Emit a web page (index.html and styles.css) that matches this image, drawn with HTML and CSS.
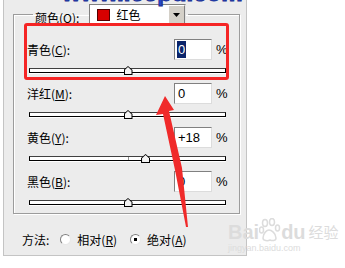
FILE: index.html
```html
<!DOCTYPE html>
<html lang="zh-CN">
<head>
    <meta charset="UTF-8">
    <meta name="viewport" content="width=device-width, initial-scale=1.0">
    <title>可选颜色</title>
    <link rel="stylesheet" href="styles.css">
</head>
<body>
    <div class="site-mark">www.leepu.com</div>

    <div class="dialog">
        <fieldset class="group">
            <legend class="group-head">
                <span class="head-label">颜色(<u>O</u>):</span>
                <span class="select">
                    <span class="swatch"></span>
                    <span class="select-text">红色</span>
                    <span class="select-btn">
                        <svg width="7" height="4" viewBox="0 0 7 4"><path d="M0 0h7L3.5 4z" fill="#000"/></svg>
                    </span>
                </span>
            </legend>

            <div class="channel">
                <span class="channel-label">青色(<u>C</u>):</span>
                <span class="value"><span class="selected">0</span></span>
                <span class="pct">%</span>
                <div class="slider"><span class="thumb" style="left: 50%"></span></div>
            </div>

            <div class="channel">
                <span class="channel-label">洋红(<u>M</u>):</span>
                <span class="value">0</span>
                <span class="pct">%</span>
                <div class="slider"><span class="thumb" style="left: 50%"></span></div>
            </div>

            <div class="channel">
                <span class="channel-label">黄色(<u>Y</u>):</span>
                <span class="value">+18</span>
                <span class="pct">%</span>
                <div class="slider tick"><span class="thumb" style="left: 59%"></span></div>
            </div>

            <div class="channel">
                <span class="channel-label">黑色(<u>B</u>):</span>
                <span class="value">0</span>
                <span class="pct">%</span>
                <div class="slider"><span class="thumb" style="left: 50%"></span></div>
            </div>
        </fieldset>

        <div class="method">
            <span>方法:</span>
            <span class="radio"></span>
            <span>相对(<u>R</u>)</span>
            <span class="radio checked"></span>
            <span>绝对(<u>A</u>)</span>
        </div>
    </div>

    <div class="highlight"></div>

    <svg class="arrow" width="345" height="268" viewBox="0 0 345 268">
        <polygon points="165,96 174,110 169,111 182,168 188,227 186,227 175,170 163,114 156,115" fill="#f02a2a"/>
    </svg>

    <div class="baidu">
        <div class="baidu-logo">
            <span class="bai">Bai</span>
            <svg width="22" height="24" viewBox="0 0 22 24">
                <g fill="none" stroke="#dcdcdc" stroke-width="1.5">
                    <ellipse cx="6" cy="5" rx="2.5" ry="3.5"/>
                    <ellipse cx="13" cy="4" rx="2.5" ry="3.5"/>
                    <ellipse cx="2.5" cy="12" rx="2" ry="3"/>
                    <ellipse cx="18.5" cy="10" rx="2" ry="3"/>
                    <path d="M4 20c0-5 4-8 6-8s7 3 7 8c0 3-4 3-6 2-2 1-7 1-7-2z"/>
                </g>
            </svg>
            <span class="bai">du</span>
            <span class="jy">经验</span>
        </div>
        <div class="baidu-url">jingyan.baidu.com</div>
    </div>
</body>
</html>
```

FILE: styles.css
```css
body {
    margin: 0;
    width: 345px;
    height: 268px;
    overflow: hidden;
    position: relative;
    background-color: #fff;
    font-family: "Noto Sans CJK SC", "Liberation Sans", sans-serif;
    font-size: 12px;
    color: #000;
}
.dialog {
    margin-left: 3px;
    width: 244px;
    height: 256px;
    border: 1px solid #c4c4c4;
    border-top: none;
    background-color: #ececec;
    padding-top: 3px;
    box-sizing: border-box;
}
.group {
    margin: 0 0 0 9px;
    width: 227px;
    box-sizing: border-box;
    min-width: 0;
    padding: 13px 10px 8px 13px;
    border: 1px solid #9c9c9c;
    box-shadow: inset 1px 1px 0 #fff, 1px 1px 0 #fff;
}
.group-head {
    display: flex;
    align-items: center;
    gap: 10px;
    padding: 0 2px;
    margin-left: 6px;
}
.head-label {
    margin-top: 6px;
}
.select {
    display: flex;
    align-items: center;
    width: 97px;
    height: 22px;
    box-sizing: border-box;
    border: 1px solid;
    border-color: #808080 #e4e4e4 #e4e4e4 #808080;
    background-color: #fff;
}
.swatch {
    width: 13px;
    height: 12px;
    margin-left: 7px;
    background-color: #d80000;
    border: 1px solid #500;
    box-sizing: border-box;
}
.select-text {
    margin-left: 6px;
}
.select-btn {
    margin-left: auto;
    width: 17px;
    height: 100%;
    display: flex;
    align-items: center;
    justify-content: center;
    box-sizing: border-box;
    background-color: #d4d0c8;
    border: 1px solid;
    border-color: #fff #808080 #808080 #fff;
}
.channel {
    display: grid;
    grid-template-columns: 1fr 38px 17px;
    align-items: center;
    margin-bottom: 10px;
}
.channel:last-child {
    margin-bottom: 0;
}
.value {
    height: 21px;
    box-sizing: border-box;
    border: 1px solid;
    border-color: #808080 #dcdcdc #dcdcdc #808080;
    background-color: #fff;
    padding-left: 3px;
    line-height: 19px;
    font-family: "Liberation Sans", sans-serif;
    font-size: 13px;
}
.selected {
    background-color: #0a246a;
    color: #fff;
    outline: 1px solid #0a246a;
}
.pct {
    padding-left: 4px;
    font-family: "Liberation Sans", sans-serif;
    font-size: 13px;
}
.slider {
    grid-column: 1 / -1;
    position: relative;
    margin: 8px 3px 0 2px;
    height: 3px;
    border: 1px solid #000;
    border-top-color: #404040;
    background-color: #fff;
    box-shadow: 0 1px 0 #fff;
}
.tick::before {
    content: "";
    position: absolute;
    left: 50%;
    top: 0;
    width: 1px;
    height: 3px;
    background-color: #909090;
}
.thumb {
    position: absolute;
    top: -3px;
    width: 9px;
    height: 9px;
    margin-left: -4px;
}
.thumb::before {
    content: "";
    position: absolute;
    inset: 0;
    background-color: #000;
    clip-path: polygon(0 100%, 0 45%, 50% 0, 100% 45%, 100% 100%);
}
.thumb::after {
    content: "";
    position: absolute;
    inset: 1px;
    background-color: #f4f4f4;
    clip-path: polygon(0 100%, 0 45%, 50% 0, 100% 45%, 100% 100%);
}
.method {
    display: flex;
    align-items: center;
    margin: 17px 0 0 18px;
}
.radio {
    position: relative;
    width: 11px;
    height: 11px;
    box-sizing: border-box;
    border-radius: 50%;
    border: 1px solid;
    border-color: #808080 #e8e8e8 #e8e8e8 #808080;
    background-color: #fff;
    margin: 0 6px 0 11px;
}
.radio + span + .radio {
    margin-left: 13px;
}
.checked::after {
    content: "";
    position: absolute;
    left: 3px;
    top: 3px;
    width: 3px;
    height: 3px;
    background-color: #000;
}
.site-mark {
    position: absolute;
    left: 62px;
    top: -21px;
    font-family: "Liberation Sans", sans-serif;
    font-weight: bold;
    font-size: 24px;
    color: #2446c8;
    -webkit-text-stroke: 1px #1a2f90;
    z-index: 2;
}
.highlight {
    position: absolute;
    left: 24px;
    top: 23px;
    width: 205px;
    height: 57px;
    box-sizing: border-box;
    border: 3px solid #f52525;
    border-radius: 3px;
}
.arrow {
    position: absolute;
    left: 0;
    top: 0;
}
.baidu {
    position: absolute;
    left: 228px;
    top: 214px;
    color: #dcdcdc;
}
.baidu-logo {
    display: flex;
    align-items: flex-end;
    height: 28px;
}
.bai {
    font-family: "Liberation Sans", sans-serif;
    font-weight: bold;
    font-size: 20px;
    line-height: 20px;
}
.jy {
    margin-left: 3px;
    font-size: 15px;
    line-height: 20px;
}
.baidu-url {
    font-family: "Liberation Sans", sans-serif;
    font-size: 9px;
    margin-top: 1px;
}
```
